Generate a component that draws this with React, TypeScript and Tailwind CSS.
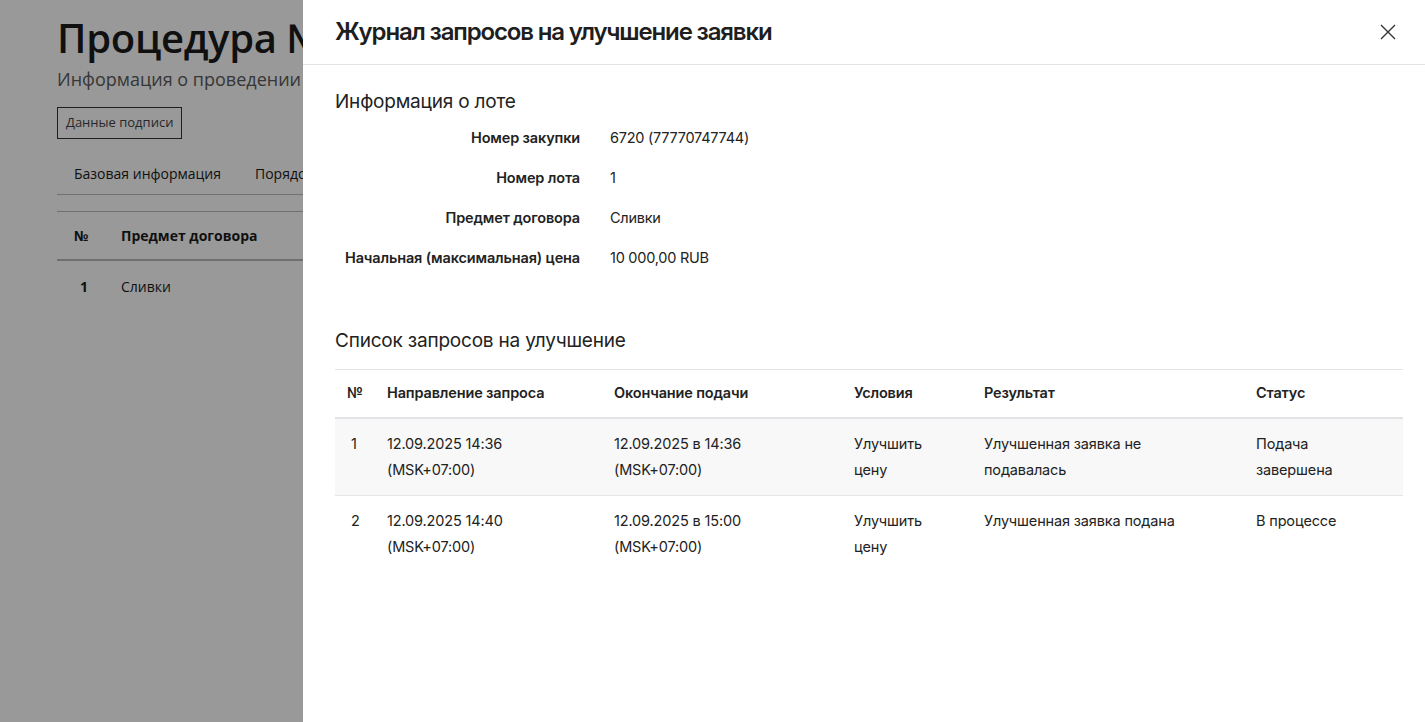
import React from "react";

const rows = [
  {
    n: "1",
    dir: ["12.09.2025 14:36", "(MSK+07:00)"],
    end: ["12.09.2025 в 14:36", "(MSK+07:00)"],
    cond: "Улучшить цену",
    res: "Улучшенная заявка не подавалась",
    status: "Подача завершена",
    shaded: true,
  },
  {
    n: "2",
    dir: ["12.09.2025 14:40", "(MSK+07:00)"],
    end: ["12.09.2025 в 15:00", "(MSK+07:00)"],
    cond: "Улучшить цену",
    res: "Улучшенная заявка подана",
    status: "В процессе",
    shaded: false,
  },
];

const info = [
  ["Номер закупки", "6720 (77770747744)"],
  ["Номер лота", "1"],
  ["Предмет договора", "Сливки"],
  ["Начальная (максимальная) цена", "10 000,00 RUB"],
];

export default function App() {
  return (
    <div className="relative h-[722px] w-[1425px] overflow-hidden bg-white">
      {/* background page */}
      <div className="pl-[57px] pr-10 pt-[15px] font-['Open_Sans',sans-serif] text-[#1b1b1b]">
        <h1 className="text-[40px] font-semibold leading-[46px] tracking-[-0.3px]">Процедура №</h1>
        <div className="mt-[4px] text-[18px] leading-[28px] text-[#5a5a5a]">Информация о проведении</div>
        <button className="mt-[14px] h-[32px] border border-[#333] px-[8px] text-[13px] text-[#444]">Данные подписи</button>
        <div className="mt-[25px] flex gap-[34px] border-b border-[#bbb] px-[17px] pb-[10px] text-[14px] leading-[20px]">
          <span>Базовая информация</span>
          <span>Порядок</span>
        </div>
        <div className="mt-[16px] border-t border-[#bbb]">
          <div className="flex h-[49px] items-center border-b-2 border-[#bbb] px-[17px] text-[14px] font-bold">
            <span className="w-[47px]">№</span>
            <span>Предмет договора</span>
          </div>
          <div className="flex h-[50px] items-center px-[17px] text-[14px]">
            <span className="w-[47px] pl-[6px] font-bold">1</span>
            <span>Сливки</span>
          </div>
        </div>
      </div>

      {/* overlay */}
      <div className="absolute inset-0 bg-black/40" />

      {/* drawer */}
      <div className="absolute bottom-0 right-0 top-0 w-[1122px] bg-white font-['Inter',sans-serif] text-[#1a1a1a]">
        <div className="flex h-[65px] items-center justify-between border-b border-[#e3e3e3] pl-[32px] pr-[28px]">
          <h2 className="text-[24px] font-semibold tracking-[-1.15px] text-[#1e1e1e]">Журнал запросов на улучшение заявки</h2>
          <svg width="18" height="18" viewBox="0 0 18 18" className="text-[#333]">
            <path d="M2 2L16 16M16 2L2 16" stroke="currentColor" strokeWidth="1.4" />
          </svg>
        </div>

        <div className="pl-[32px] pr-[22px]">
          <h3 className="mt-[25px] text-[19px] leading-[24px] tracking-[-0.2px] text-[#222]">Информация о лоте</h3>
          <div className="mt-[4px]">
            {info.map(([k, v]) => (
              <div key={k} className="flex h-[40px] items-center text-[14px]">
                <div className="w-[245px] text-right text-[14.5px] font-semibold tracking-[-0.15px] text-[#222]">{k}</div>
                <div className="pl-[30px] text-[14.5px] tracking-[-0.25px] text-[#222]">{v}</div>
              </div>
            ))}
          </div>

          <h3 className="mt-[51px] text-[19px] leading-[24px] tracking-[-0.2px] text-[#222]">Список запросов на улучшение</h3>

          <table className="mt-[16px] w-[1068px] table-fixed border-t border-[#e5e5e5] text-left text-[14.5px] tracking-[-0.15px] text-[#222]">
            <colgroup>
              <col className="w-[40px]" />
              <col className="w-[227px]" />
              <col className="w-[240px]" />
              <col className="w-[130px]" />
              <col className="w-[272px]" />
              <col className="w-[159px]" />
            </colgroup>
            <thead>
              <tr className="h-[48px] border-b-2 border-[#e1e3e6]">
                <th className="pl-[12px] font-semibold">№</th>
                <th className="pl-[12px] font-semibold">Направление запроса</th>
                <th className="pl-[12px] font-semibold">Окончание подачи</th>
                <th className="pl-[12px] font-semibold">Условия</th>
                <th className="pl-[12px] font-semibold">Результат</th>
                <th className="pl-[12px] font-semibold">Статус</th>
              </tr>
            </thead>
            <tbody>
              {rows.map((r) => (
                <tr key={r.n} className={r.shaded ? "border-b border-[#e5e5e5] bg-[#f8f8f8]" : ""}>
                  <td className="py-[12px] pl-[16px] align-top leading-[26px]">{r.n}</td>
                  <td className="py-[12px] pl-[12px] align-top leading-[26px]">
                    <div>{r.dir[0]}</div>
                    <div>{r.dir[1]}</div>
                  </td>
                  <td className="py-[12px] pl-[12px] align-top leading-[26px]">
                    <div>{r.end[0]}</div>
                    <div>{r.end[1]}</div>
                  </td>
                  <td className="py-[12px] pl-[12px] pr-[30px] align-top leading-[26px]">{r.cond}</td>
                  <td className="py-[12px] pl-[12px] pr-[40px] align-top leading-[26px]">{r.res}</td>
                  <td className="py-[12px] pl-[12px] pr-[60px] align-top leading-[26px]">{r.status}</td>
                </tr>
              ))}
            </tbody>
          </table>
        </div>
      </div>
    </div>
  );
}
